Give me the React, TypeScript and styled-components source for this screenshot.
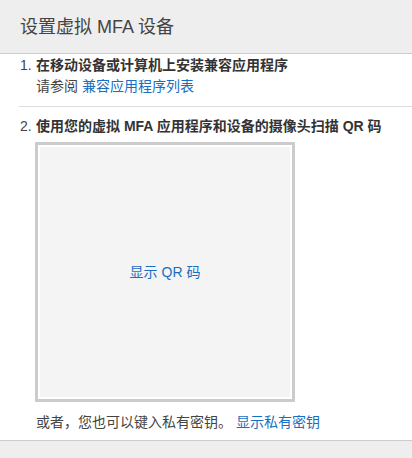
import styled, { createGlobalStyle } from "styled-components";

const GlobalStyle = createGlobalStyle`
  html, body {
    margin: 0;
    padding: 0;
    background: #ffffff;
  }
  body {
    font-family: "Liberation Sans", Arial, "Noto Sans CJK SC", sans-serif;
    color: #444444;
  }
`;

const Dialog = styled.div`
  width: 412px;
  height: 458px;
  display: flex;
  flex-direction: column;
  overflow: hidden;
`;

const Header = styled.div`
  height: 53px;
  background: #eeeeee;
  border-bottom: 1px solid #cccccc;
  display: flex;
  align-items: center;
  padding-left: 20px;
  flex-shrink: 0;
`;

const Title = styled.h2`
  margin: 0;
  font-size: 18px;
  font-weight: normal;
  color: #444444;
  line-height: 24px;
`;

const Body = styled.div`
  flex: 1;
  padding-left: 19px;
`;

const Step = styled.div<{ $divider?: boolean }>`
  display: flex;
  padding: ${(p) => (p.$divider ? "9px 0 0" : "1px 0 9px")};
  border-top: ${(p) => (p.$divider ? "1px solid #dddddd" : "none")};
  font-size: 14px;
  line-height: 21px;
`;

const Num = styled.span`
  width: 16px;
  flex-shrink: 0;
  padding-left: 1px;
`;

const StepBody = styled.div`
  display: flex;
  flex-direction: column;
`;

const StepTitle = styled.div`
  font-weight: bold;
  color: #333333;
`;

const Link = styled.a`
  color: #1a6ec0;
  text-decoration: none;
  cursor: pointer;
`;

const QrFrame = styled.div`
  margin-top: 5px;
  margin-left: -1px;
  width: 250px;
  height: 250px;
  border: 3px solid #cccccc;
  padding: 2px;
  background: #ffffff;
`;

const QrInner = styled.div`
  width: 100%;
  height: 100%;
  background: #f4f4f4;
  display: flex;
  align-items: center;
  justify-content: center;
  font-size: 14px;
`;

const Alt = styled.p`
  margin: 10px 0 0;
  font-size: 14px;
  line-height: 21px;
  color: #444444;
`;

const Footer = styled.div`
  height: 17px;
  background: #eeeeee;
  border-top: 1px solid #cccccc;
  flex-shrink: 0;
`;

export default function App() {
  return (
    <>
      <GlobalStyle />
      <Dialog>
        <Header>
          <Title>设置虚拟 MFA 设备</Title>
        </Header>
        <Body>
          <Step>
            <Num>1.</Num>
            <StepBody>
              <StepTitle>在移动设备或计算机上安装兼容应用程序</StepTitle>
              <span>
                请参阅 <Link>兼容应用程序列表</Link>
              </span>
            </StepBody>
          </Step>
          <Step $divider>
            <Num>2.</Num>
            <StepBody>
              <StepTitle>使用您的虚拟 MFA 应用程序和设备的摄像头扫描 QR 码</StepTitle>
              <QrFrame>
                <QrInner>
                  <Link>显示 QR 码</Link>
                </QrInner>
              </QrFrame>
              <Alt>
                或者，您也可以键入私有密钥。 <Link>显示私有密钥</Link>
              </Alt>
            </StepBody>
          </Step>
        </Body>
        <Footer />
      </Dialog>
    </>
  );
}
